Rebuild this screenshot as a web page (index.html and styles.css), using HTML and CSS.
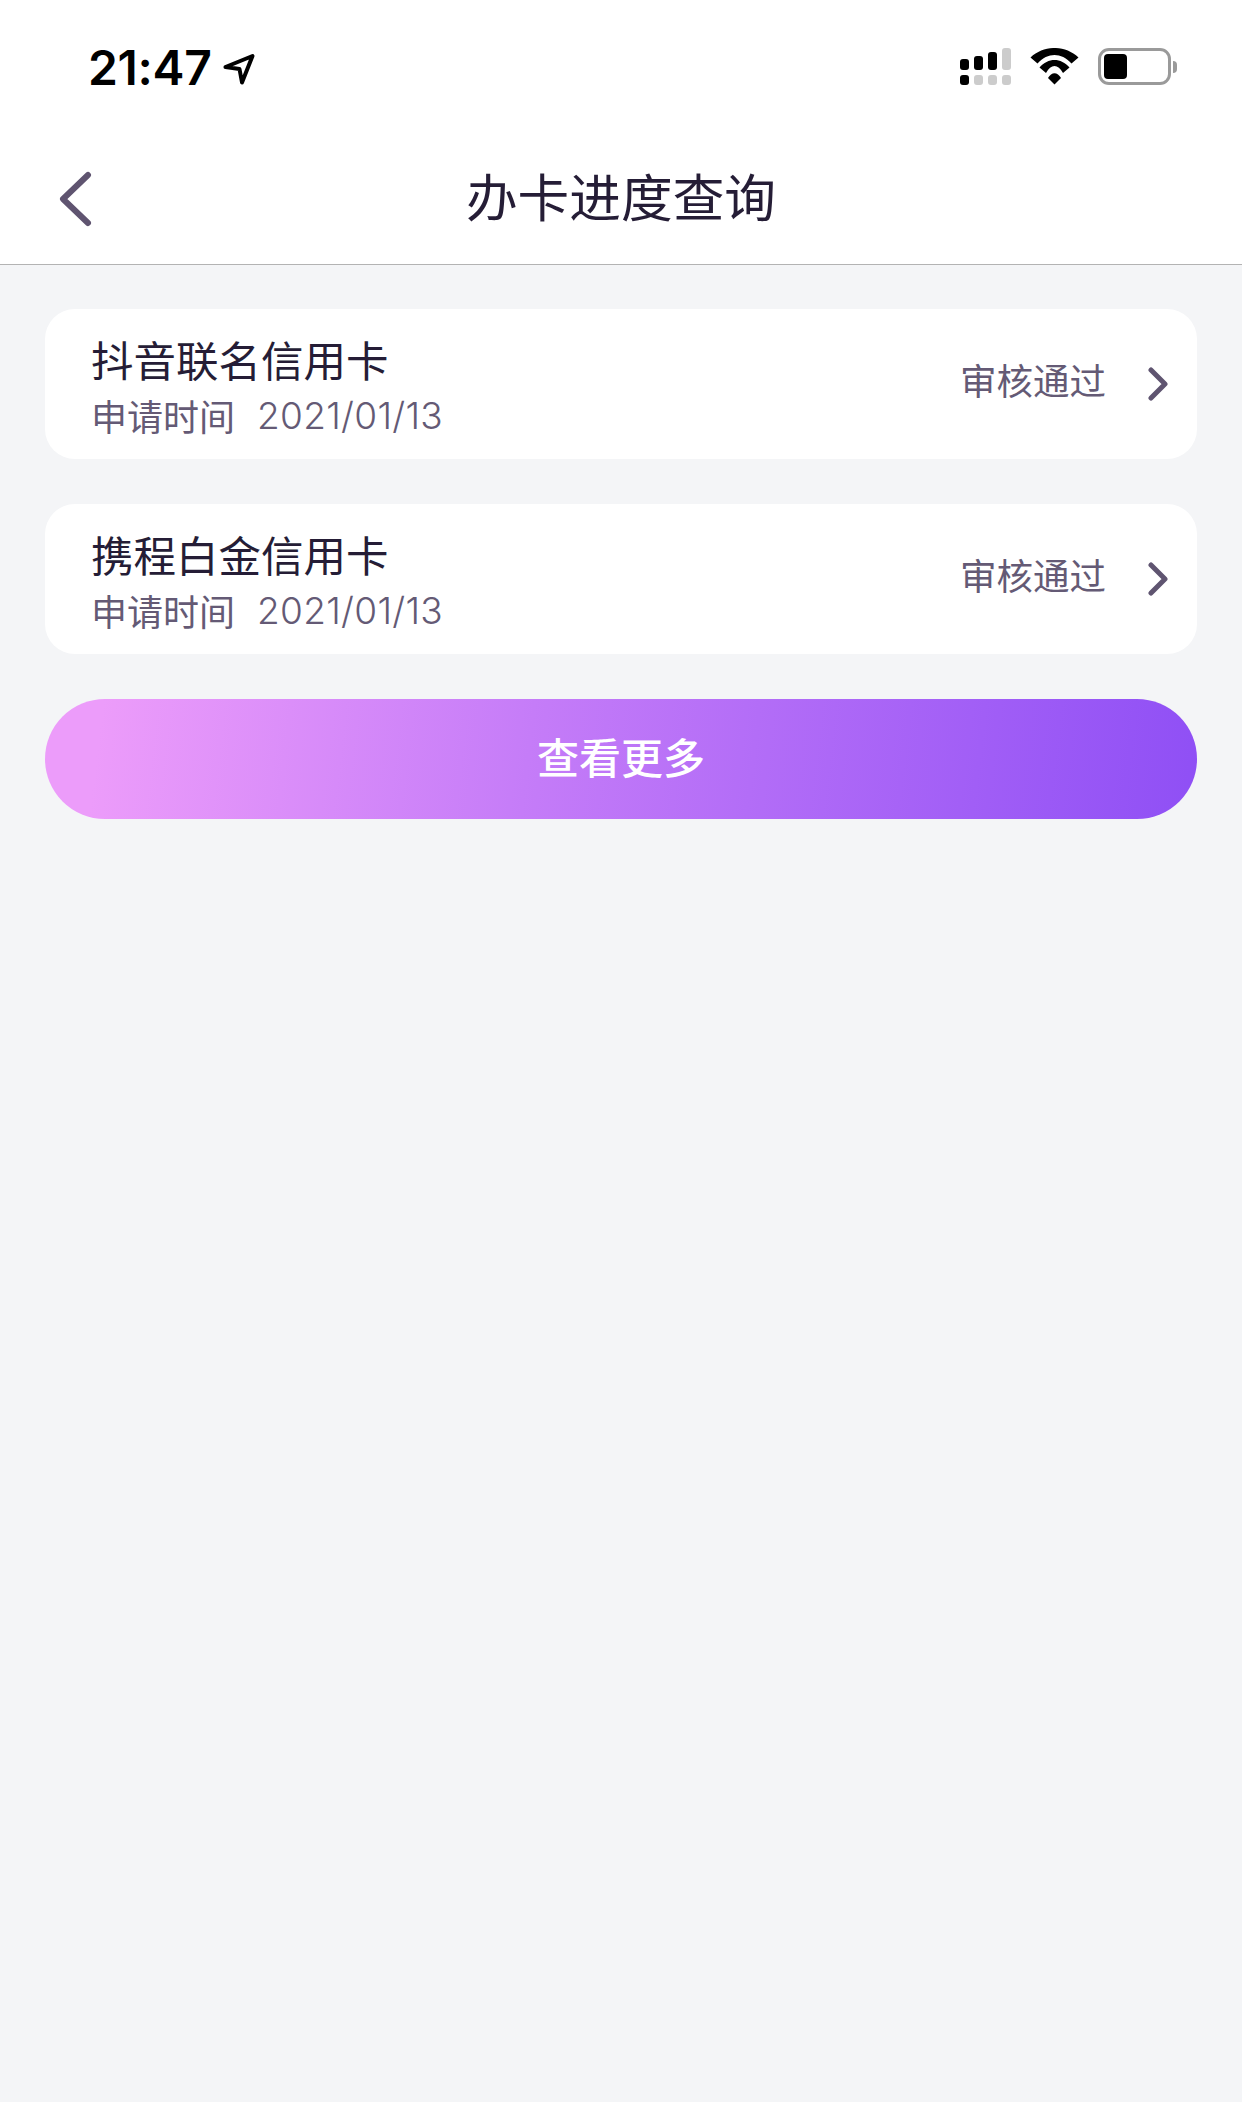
FILE: index.html
```html
<!DOCTYPE html>
<html lang="zh-CN">
<head>
<meta charset="utf-8">
<title>办卡进度查询</title>
<link rel="stylesheet" href="styles.css">
</head>
<body>
<header class="top">
  <div class="status">
    <div class="status-left">
      <span class="time">21:47</span>
      <svg class="loc" width="32" height="32" viewBox="0 0 32 32"><path d="M2.500 14 29.500 3 19 29.500 16.500 16Z" fill="none" stroke="#000" stroke-width="4" stroke-linejoin="round"/></svg>
    </div>
    <div class="status-right">
      <svg width="52" height="37" viewBox="0 0 52 37">
        <g fill="#000"><rect x="0" y="11" width="9" height="11" rx="3"/><rect x="14" y="8" width="9" height="14" rx="3"/><rect x="28" y="4" width="9" height="18" rx="3"/><rect x="0" y="27" width="9" height="10" rx="3"/></g>
        <g fill="#ccc"><rect x="42" y="0" width="9" height="22" rx="3"/><rect x="14" y="27" width="9" height="10" rx="3"/><rect x="28" y="27" width="9" height="10" rx="3"/><rect x="42" y="27" width="9" height="10" rx="3"/></g>
      </svg>
      <svg width="50" height="37" viewBox="0 0 50 37">
        <path d="M0.500 9.500C14 -3.200 35 -3.200 48.500 9.500L41.500 15.500C31 4.200 18 4.200 7.500 15.500Z" fill="#000"/>
        <path d="M9.500 19.500C18 9.500 31 9.500 39.500 19.500L33 25C28 15.500 21 15.500 16 25Z" fill="#000"/>
        <path d="M18 30C21.500 23.500 27.500 23.500 31 30L24.500 36.500Z" fill="#000"/>
      </svg>
      <div class="battery"><div class="battery-body"><div class="battery-fill"></div></div><div class="battery-nub"></div></div>
    </div>
  </div>
  <nav class="nav">
    <svg class="back" width="34" height="56" viewBox="0 0 34 56"><path d="M29 4 4 28 29 52" fill="none" stroke="#5f5470" stroke-width="6" stroke-linecap="round" stroke-linejoin="round"/></svg>
    <h1 class="title">办卡进度查询</h1>
    <span></span>
  </nav>
</header>
<main class="content">
  <a class="card">
    <div class="info">
      <div class="name">抖音联名信用卡</div>
      <div class="date"><span>申请时间</span><span class="num">2021/01/13</span></div>
    </div>
    <span class="state">审核通过</span>
    <svg class="arrow" width="20" height="34" viewBox="0 0 20 34"><path d="M3 3 17 17 3 31" fill="none" stroke="#5f5470" stroke-width="5" stroke-linecap="round" stroke-linejoin="round"/></svg>
  </a>
  <a class="card">
    <div class="info">
      <div class="name">携程白金信用卡</div>
      <div class="date"><span>申请时间</span><span class="num">2021/01/13</span></div>
    </div>
    <span class="state">审核通过</span>
    <svg class="arrow" width="20" height="34" viewBox="0 0 20 34"><path d="M3 3 17 17 3 31" fill="none" stroke="#5f5470" stroke-width="5" stroke-linecap="round" stroke-linejoin="round"/></svg>
  </a>
  <button class="more">查看更多</button>
</main>
</body>
</html>
```
FILE: styles.css
```css
* { box-sizing: border-box; }
html, body { margin: 0; padding: 0; }
body {
  width: 1242px;
  height: 2102px;
  overflow: hidden;
  background: #f4f5f7;
  font-family: "Noto Sans CJK SC", "Inter", sans-serif;
}
.top {
  background: #fff;
  height: 265px;
  border-bottom: 1px solid #b3b3b3;
}
.status {
  height: 130px;
  display: flex;
  justify-content: space-between;
  padding: 48px 65px 0 88px;
  align-items: flex-start;
}
.status-left { display: flex; align-items: center; gap: 11px; }
.time {
  font: 600 48px/39px "Inter", sans-serif;
  color: #000;
  letter-spacing: -0.3px;
}
.loc { margin-top: 2px; }
.status-right { display: flex; align-items: center; gap: 18px; }
.battery { display: flex; align-items: center; gap: 2px; }
.battery-body {
  width: 73px;
  height: 37px;
  border: 3px solid #9a9a9a;
  border-radius: 11px;
  padding: 3px;
}
.battery-fill { width: 23px; height: 100%; background: #000; border-radius: 4px; }
.battery-nub {
  width: 4px;
  height: 12px;
  background: #9a9a9a;
  border-radius: 0 6px 6px 0;
}
.nav {
  height: 134px;
  display: grid;
  grid-template-columns: 1fr auto 1fr;
  align-items: center;
  padding: 0 59px;
}
.back { display: block; margin-top: 3px; }
.title {
  margin: 0 0 5px;
  font-size: 51.700px;
  line-height: 70px;
  font-weight: 400;
  color: #251d36;
}
.content {
  padding: 44px 45px 0;
  display: flex;
  flex-direction: column;
  gap: 45px;
}
.card {
  height: 150px;
  background: #fff;
  border-radius: 30px;
  display: flex;
  align-items: center;
  padding: 0 29px 0 46px;
}
.info { flex: 1; display: flex; flex-direction: column; }
.name {
  font-size: 42.500px;
  line-height: 60px;
  color: #251d36;
}
.date {
  display: flex;
  gap: 22px;
  font-size: 36px;
  line-height: 50px;
  color: #645a75;
  margin-top: 1px;
}
.num { font-family: "Inter", sans-serif; font-size: 37px; font-weight: 300; letter-spacing: 0.3px; position: relative; top: 1px; }
.state { font-size: 36.500px; line-height: 50px; color: #645a75; margin: 0 42px 9px 0; }
.arrow { display: block; }
.more {
  height: 120px;
  border: 0;
  border-radius: 60px;
  background: linear-gradient(97deg, #ec9cfa 5%, #c57cf8 42%, #8f4ff5 100%);
  color: #fff;
  font-family: inherit;
  font-size: 42px;
  font-weight: 500;
  padding: 0 0 7px;
}
```
